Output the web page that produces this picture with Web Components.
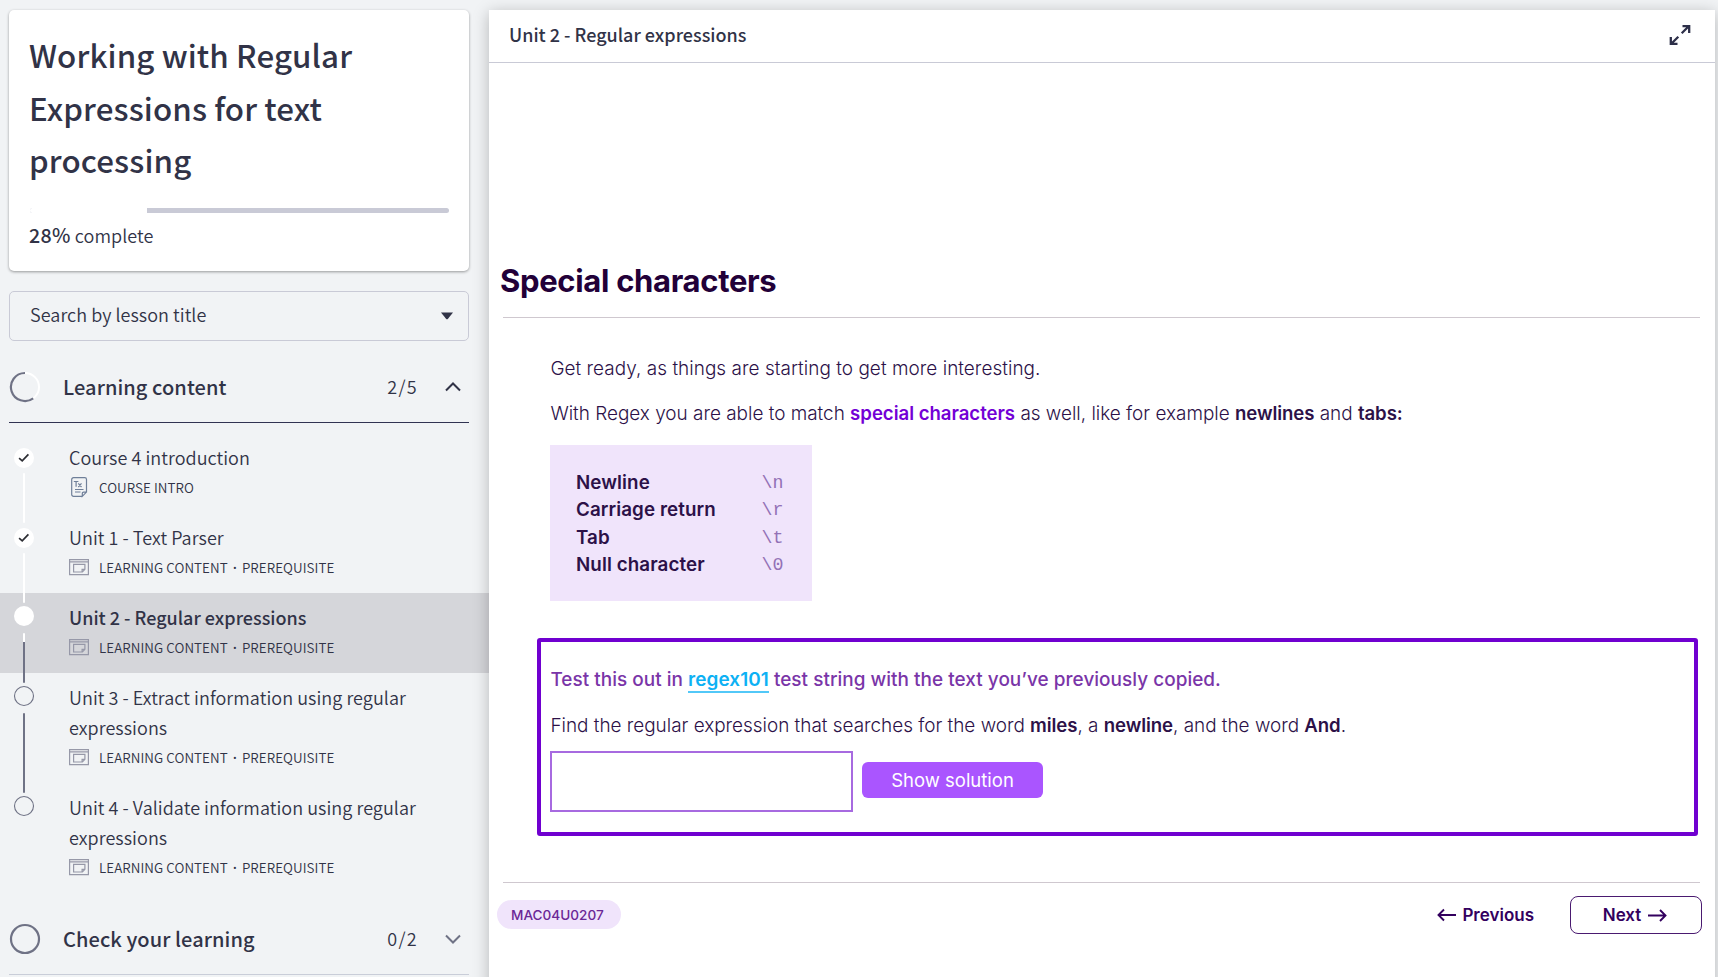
<!DOCTYPE html>
<html lang="en">
<head>
<meta charset="utf-8">
<title>Working with Regular Expressions for text processing</title>
<style>
html,body{margin:0;height:100%;overflow:hidden;background:#f1f3f5}
body{font-family:"Noto Sans CJK SC","Noto Sans",sans-serif;color:#313347}
</style>
</head>
<body>
<course-app>
  <course-sidebar slot="side">
    <course-card percent="28">Working with Regular Expressions for text processing</course-card>
    <lesson-search>Search by lesson title</lesson-search>
    <section-header label="Learning content" count="2/5" open></section-header>
    <lesson-list>
      <lesson-item state="done" icon="text" meta="COURSE INTRO">Course 4 introduction</lesson-item>
      <lesson-item state="done" icon="page" meta="LEARNING CONTENT · PREREQUISITE">Unit 1 - Text Parser</lesson-item>
      <lesson-item state="current" icon="page" meta="LEARNING CONTENT · PREREQUISITE">Unit 2 - Regular expressions</lesson-item>
      <lesson-item state="todo" icon="page" meta="LEARNING CONTENT · PREREQUISITE">Unit 3 - Extract information using regular expressions</lesson-item>
      <lesson-item state="todo" last icon="page" meta="LEARNING CONTENT · PREREQUISITE">Unit 4 - Validate information using regular expressions</lesson-item>
    </lesson-list>
    <section-header label="Check your learning" count="0/2"></section-header>
  </course-sidebar>
  <lesson-panel slot="main" heading="Unit 2 - Regular expressions">
    <lesson-content></lesson-content>
    <lesson-footer code="MAC04U0207"></lesson-footer>
  </lesson-panel>
</course-app>
<script>
const define = (name, render) => customElements.define(name, class extends HTMLElement {
  connectedCallback() {
    if (this.shadowRoot) return;
    this.attachShadow({ mode: 'open' }).innerHTML = render(this);
  }
});

define('course-app', () => `
<style>
:host{display:grid;grid-template-columns:489px 1226px;height:100vh;overflow:hidden}
::slotted(*){min-width:0}
</style>
<slot name="side"></slot><slot name="main"></slot>`);

define('course-sidebar', () => `
<style>:host{display:flex;flex-direction:column;padding-top:10px}</style><slot></slot>`);

define('course-card', el => `
<style>
:host{display:block;box-sizing:border-box;height:261px;width:460px;margin-left:9px;padding:19px 20px 0;background:#fff;border-radius:5px;box-shadow:0 1px 3px rgba(0,0,0,.38)}
h1{margin:0 0 21px;font-size:31.3px;line-height:52.5px;font-weight:500;letter-spacing:.12px}
.bar{display:flex;height:5px;width:419px;margin-left:1px;background:#c9cad6;border-radius:3px;overflow:hidden}
.bar i{width:117px;background:#fff}
p{margin:7px 0 0 0;font-size:18px;line-height:30px;font-weight:350;letter-spacing:.08px}
b{font-weight:500;font-size:19.6px;letter-spacing:.3px}
</style>
<h1><slot></slot></h1><div class="bar"><i></i></div><p><b>${el.getAttribute('percent')}%</b> complete</p>`);

define('lesson-search', () => `
<style>
:host{display:flex;box-sizing:border-box;height:50px;width:460px;margin:20px 0 11px 9px;border:1px solid #c9cad6;border-radius:5px;align-items:center;justify-content:space-between;padding:0 15px 0 20px;font-size:18px;line-height:27px;font-weight:350;letter-spacing:.04px}
span{padding-bottom:3px}
svg{display:block}
</style>
<span><slot></slot></span><svg width="12" height="8"><path d="M0 .5h12L7 6.8q-1 1-2 0z" fill="#313347"/></svg>`);

define('section-header', el => {
  const open = el.hasAttribute('open');
  const ring = open
    ? `<circle cx="16" cy="16" r="14" fill="none" stroke="#fff" stroke-width="2"/><path d="M16 2A14 14 0 1 0 24.2 27.3" fill="none" stroke="#6f7285" stroke-width="2.2"/>`
    : `<circle cx="16" cy="16" r="14" fill="none" stroke="#6f7285" stroke-width="2.2"/>`;
  return `
<style>
:host{display:flex;align-items:center;box-sizing:border-box;width:460px;height:71px;flex:none;margin-left:9px;border-bottom:1px solid ${open ? '#313352' : '#c9cdd8'};line-height:30px}
svg{display:block;flex:none}
.ring{margin-right:22px}
b{font-size:20px;font-weight:500;letter-spacing:.08px;flex:1;padding-bottom:1px}
span{font-size:18px;font-weight:350;letter-spacing:1.3px;margin-right:26px;padding-bottom:2px}
.chev{margin-right:7px}
</style>
<svg class="ring" width="32" height="32">${ring}</svg>
<b>${el.getAttribute('label')}</b><span>${el.getAttribute('count')}</span>
<svg class="chev" width="18" height="12"><path d="${open ? 'M2 9.5l7-7 7 7' : 'M2 2.5l7 7 7-7'}" fill="none" stroke="${open ? '#313347' : '#6f7285'}" stroke-width="2"/></svg>`;
});

define('lesson-list', () => `<style>:host{display:block;padding:10px 0 11px}</style><slot></slot>`);

const ICONS = {
  text: `<svg width="20" height="22" viewBox="0 0 20 22" fill="none" stroke="#6f7f99" stroke-width="1.2"><path d="M13.3 20.3H4.5a1.8 1.8 0 0 1-1.8-1.8v-15a1.8 1.8 0 0 1 1.8-1.8h11.2a1.8 1.8 0 0 1 1.8 1.8v12.6l-4.2 4.2v-2.9a1.3 1.3 0 0 1 1.3-1.3h2.9M4.8 5.500h4.600M7.100 5.500v5.300M9.300 7.400l3.200 3.600M12.500 7.400l-3.200 3.600M6 13.500h8.500M6 16h5.500"/></svg>`,
  page: `<svg width="20" height="18" viewBox="0 0 20 18" fill="none" stroke="#9698a8" stroke-width="1.2"><path d="M.6 1.600h18.800v15H.6zM.6 3.800h18.800M4.600 6.300h11.300v5l-2.500 2.700H4.600zM15.700 11.300h-2.600v2.600"/></svg>`
};

define('lesson-item', el => {
  const s = el.getAttribute('state');
  const y = s === 'done' ? 25 : 23;
  const dot = s === 'todo'
    ? `<circle cx="11" cy="11" r="9.5" fill="none" stroke="#6f7285" stroke-width="1.1"/>`
    : `<circle cx="11" cy="11" r="10" fill="#fff"/>` + (s === 'done' ? `<path d="M6.100 11.200l3.100 2.700 6.200-6.600" fill="none" stroke="#2c2d33" stroke-width="1.7"/>` : '');
  const line = s === 'done' ? '#fff' : s === 'current' ? 'linear-gradient(#fff 9px,#6f7285 9px)' : '#6f7285';
  const meta = el.getAttribute('meta').split(' · ').join('<i>·</i>');
  return `
<style>
:host{display:block;position:relative;box-sizing:border-box;padding:9px 40px 16px 69px;background:${s === 'current' ? '#d5d6da' : 'transparent'}}
.t{font-size:18px;line-height:30px;letter-spacing:${s === 'current' ? '0' : '.05px'};font-weight:${s === 'current' ? '500' : '350'}}
.m{display:flex;align-items:center;height:20px;margin-top:5px;font-size:13.4px;line-height:20px;font-weight:350;letter-spacing:.07px}
.m svg{margin-right:10px;flex:none}
.m i{display:inline-block;width:14.2px;text-align:center;font-family:"Noto Sans",sans-serif;font-style:normal;font-weight:600;line-height:1}
.dot{position:absolute;left:13px;top:${y - 11}px}
.line{position:absolute;left:23px;top:40px;bottom:-10px;width:2px;border-radius:1px;background:${line};z-index:1}
</style>
${el.hasAttribute('last') ? '' : '<div class="line"></div>'}
<svg class="dot" width="22" height="22">${dot}</svg>
<div class="t"><slot></slot></div>
<div class="m">${ICONS[el.getAttribute('icon')]}<span>${meta}</span></div>`;
});

define('lesson-panel', el => `
<style>
:host{display:flex;flex-direction:column;position:relative;z-index:2;margin-top:10px;height:980px;background:#fff;box-shadow:0 3px 15px rgba(0,0,0,.25)}
header{display:flex;box-sizing:border-box;height:53px;border-bottom:1px solid #c9cad6;align-items:center;justify-content:space-between;padding:0 24px 3px 20px;font-size:18px;font-weight:500;line-height:30px}
span{padding-bottom:2px}
svg{display:block}
</style>
<header><span>${el.getAttribute('heading')}</span>
<svg width="22" height="22" fill="none" stroke="#2d2f49" stroke-width="2.3"><path d="M12.700 9.300l7-7M13.500 2.200h6.700v6.700M9.300 12.700l-7 7M1.800 13.100v6.700h6.700"/></svg></header>
<slot></slot>`);

define('lesson-content', () => `
<style>
:host{display:block;padding:197.5px 15px 0 13px;font-family:Inter,sans-serif;font-size:18.96px;line-height:30px;font-weight:300;color:#2c1148}
h2{margin:0;font-size:31px;line-height:40px;font-weight:700;letter-spacing:-.32px;color:#220038;margin-left:-2px}
.hr{height:1px;background:#cfc8cf;margin:16.5px 0 0 .5px}
.body{margin-left:48.4px}
p{margin:0;white-space:nowrap}
b{font-weight:600;font-size:18.6px;letter-spacing:-.08px}
.hot{color:#7300d6;letter-spacing:-.02px}
.table{display:grid;grid-template-columns:185.5px 1fr;box-sizing:border-box;width:262px;height:156px;margin:16px 0 0 -.4px;padding:23.8px 26px;background:#f0e4fb;grid-auto-rows:27.4px;line-height:27.4px}
.table b{font-size:18.8px;letter-spacing:.08px}
.table code{font:300 18.3px/27.4px "Liberation Mono",monospace;color:#9371b6;padding-top:1px}
task-box{margin:37px 0 0 -13.4px}
a{font-weight:600;color:#0db1f4;border-bottom:2px solid #52c8f8;display:inline-block;line-height:22px;letter-spacing:.06px}
.lead{font-weight:500;color:#7a35a8;letter-spacing:.035px}
</style>
<h2>Special characters</h2><div class="hr"></div>
<div class="body">
<p style="margin-top:36px;letter-spacing:.04px">Get ready, as things are starting to get more interesting.</p>
<p style="margin-top:14px;letter-spacing:-.01px">With Regex you are able to match <b class="hot">special characters</b> as well, like for example <b>newlines</b> and <b>tabs:</b></p>
<div class="table"><b>Newline</b><code>\\n</code><b>Carriage return</b><code>\\r</code><b>Tab</b><code>\\t</code><b>Null character</b><code>\\0</code></div>
<task-box>
<p class="lead" slot="lead">Test this out in <a>regex101</a> test string with the text you’ve previously copied.</p>
<p slot="find" style="letter-spacing:-.015px">Find the regular expression that searches for the word <b>miles</b>, a <b>newline</b>, and the word <b>And</b>.</p>
</task-box>
</div>`);

define('task-box', () => `
<style>
:host{display:block;box-sizing:border-box;width:1161px;height:198px;border:4px solid #7000d0;border-radius:3px;padding:23px 9.4px 0}
.find{margin-top:15px}
.row{display:flex;align-items:flex-start;margin:10px 0 0 -.4px}
.input{box-sizing:border-box;width:303px;height:61px;border:2px solid #a76ae0;margin-right:9px}
.btn{margin-top:11px;width:181px;height:36px;border-radius:6px;background:#aa55ff;color:#fff;text-align:center;font-size:18.5px;line-height:37px;font-weight:400}
</style>
<slot name="lead"></slot><div class="find"><slot name="find"></slot></div>
<div class="row"><div class="input"></div><div class="btn">Show solution</div></div>`);

define('lesson-footer', el => `
<style>
:host{display:flex;align-items:flex-start;margin:46px 13px 0 8px;font-family:Inter,sans-serif;font-weight:600;font-size:17px;color:#33005e;position:relative}
:host::before{content:"";position:absolute;left:5.5px;right:2px;top:0;height:1px;background:#cfc8cf}
.pill{margin-top:18px;width:123.5px;height:29px;box-sizing:border-box;border-radius:15px;background:#f0e4fb;color:#6b2796;font-size:13.6px;font-weight:500;line-height:30px;padding-left:14px}
.prev,.next{display:flex;align-items:center;box-sizing:border-box;height:38px;margin-top:14px;line-height:36px}
.prev{margin-left:auto;padding:0 36px 1px 0;gap:6px}
.next{width:132px;border:1.4px solid #4a1a70;border-radius:8px;justify-content:center;gap:7px;padding:0 2px 1px 0}
svg{display:block}
</style>
<div class="pill">${el.getAttribute('code')}</div>
<div class="prev"><svg width="19" height="14" fill="none" stroke="currentColor" stroke-width="1.9"><path d="M19 7H1.500M7 1.500L1.500 7 7 12.500"/></svg>Previous</div>
<div class="next">Next<svg width="19" height="14" fill="none" stroke="currentColor" stroke-width="1.9"><path d="M0 7.500h17.500M12 2l5.500 5.500L12 13"/></svg></div>`);
</script>
</body>
</html>
